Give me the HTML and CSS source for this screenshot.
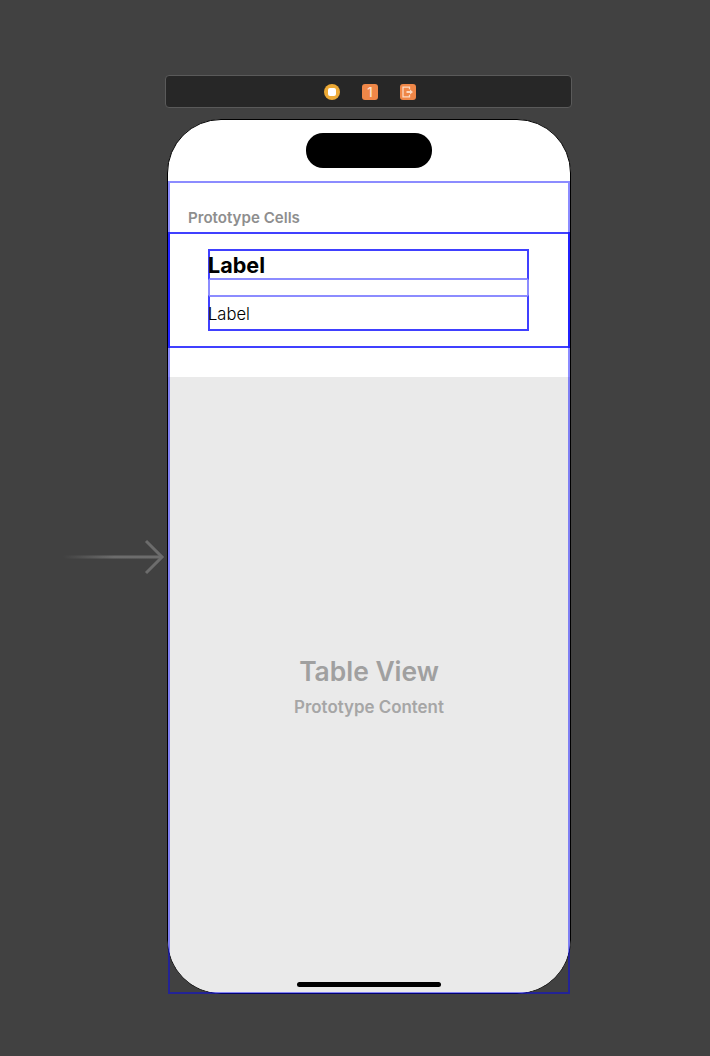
FILE: index.html
```html
<!DOCTYPE html>
<html lang="en">
<head>
    <meta charset="UTF-8">
    <title>Storyboard Scene</title>
    <link rel="stylesheet" href="styles.css">
</head>
<body>

<svg class="entry-arrow" width="102" height="36" viewBox="0 0 102 36">
    <defs>
        <linearGradient id="arrow-fade" x1="0" y1="0" x2="102" y2="0" gradientUnits="userSpaceOnUse">
            <stop offset="0" stop-color="#6c6c6c" stop-opacity="0"/>
            <stop offset="0.5" stop-color="#6c6c6c"/>
            <stop offset="1" stop-color="#6c6c6c"/>
        </linearGradient>
    </defs>
    <rect x="0" y="16.5" width="99" height="3" fill="url(#arrow-fade)"/>
    <path d="M83 2 L99 18 L83 34" fill="none" stroke="#6c6c6c" stroke-width="3"/>
</svg>

<div class="scene">
    <div class="scene-bar">
        <span class="bar-icon bar-icon-round"><span class="stop-square"></span></span>
        <span class="bar-icon">1</span>
        <span class="bar-icon">
            <svg width="12" height="12" viewBox="0 0 12 12">
                <path d="M7.5 3.2 V1.2 H1 V10.8 H7.5 V8.8" fill="none" stroke="#fbd9c2" stroke-width="1.3"/>
                <path d="M4.5 5 H8 V3.4 L11 6 L8 8.6 V7 H4.5 Z" fill="#fbd9c2"/>
            </svg>
        </span>
    </div>

    <div class="device-wrap">
        <div class="device">
            <div class="island"></div>
            <div class="table-header">Prototype Cells</div>
            <div class="cell">
                <div class="stack">
                    <div class="stack-title">Label</div>
                    <div class="stack-gap"></div>
                    <div class="stack-detail">Label</div>
                </div>
            </div>
            <div class="cell-space"></div>
            <div class="table-body">
                <div class="table-name">Table View</div>
                <div class="table-note">Prototype Content</div>
            </div>
            <div class="home-bar"></div>
        </div>
        <div class="table-outline"></div>
    </div>
</div>

</body>
</html>
```

FILE: styles.css
```css
body {
    font-family: 'Inter', 'Liberation Sans', sans-serif;
    background: #414141;
    margin: 0;
    height: 1056px;
    overflow: hidden;
    position: relative;
}

.entry-arrow {
    position: absolute;
    left: 63px;
    top: 539px;
}

.scene {
    width: 407px;
    margin-left: 165px;
    padding-top: 75px;
}

.scene-bar {
    height: 31px;
    background: #272727;
    border: 1px solid #5a5a5a;
    border-radius: 4px;
    display: flex;
    justify-content: center;
    align-items: center;
    gap: 22px;
    padding-left: 3px;
}

.bar-icon {
    width: 16px;
    height: 16px;
    border-radius: 3px;
    background: #ef8748;
    color: #fbe3d3;
    font-size: 13px;
    font-weight: 500;
    display: flex;
    justify-content: center;
    align-items: center;
}

.bar-icon-round {
    border-radius: 50%;
    background: #eca935;
}

.stop-square {
    width: 8px;
    height: 8px;
    background: #fff;
    border-radius: 2px;
}

.device-wrap {
    position: relative;
    margin-top: 11px;
    margin-left: 2px;
    width: 404px;
}

.device {
    height: 873px;
    background: #fff;
    border: 1px solid #000;
    border-radius: 54px;
    overflow: hidden;
    display: flex;
    flex-direction: column;
    position: relative;
}

.island {
    width: 126px;
    height: 35px;
    background: #000;
    border-radius: 17px;
    margin: 13px 0 0 138px;
    flex-shrink: 0;
}

.table-header {
    height: 64px;
    box-sizing: border-box;
    padding: 41px 0 0 20px;
    font-size: 15.1px;
    font-weight: 600;
    line-height: 18px;
    color: #8e8e8e;
}

.cell {
    height: 116px;
    box-sizing: border-box;
    border: 2px solid #4040ff;
    padding: 15px 38px;
}

.stack {
    width: 321px;
    display: flex;
    flex-direction: column;
}

.stack-title {
    height: 31px;
    box-sizing: border-box;
    border: 2px solid #4040ff;
    border-bottom-color: #8c8cff;
    font-size: 21.6px;
    font-weight: 700;
    line-height: 29px;
    text-indent: -2px;
    color: #000;
}

.stack-gap {
    height: 15px;
    box-sizing: border-box;
    border-left: 2px solid #8c8cff;
    border-right: 2px solid #8c8cff;
}

.stack-detail {
    height: 36px;
    box-sizing: border-box;
    border: 2px solid #4040ff;
    border-top-color: #8c8cff;
    font-size: 16.6px;
    font-weight: 300;
    line-height: 34px;
    text-indent: -2px;
    color: #000;
}

.cell-space {
    height: 29px;
}

.table-body {
    flex: 1;
    background: #eaeaea;
    text-align: center;
    padding-top: 275px;
}

.table-name {
    font-size: 26.4px;
    font-weight: 600;
    line-height: 38px;
    color: #a0a0a0;
}

.table-note {
    font-size: 16.9px;
    font-weight: 600;
    line-height: 24px;
    margin-top: 5px;
    color: #a6a6a6;
}

.home-bar {
    position: absolute;
    left: 129px;
    bottom: 6px;
    width: 144px;
    height: 5px;
    border-radius: 3px;
    background: #000;
}

.table-outline {
    position: absolute;
    left: 1px;
    top: 62px;
    width: 402px;
    height: 813px;
    box-sizing: border-box;
    border: 2px solid rgba(0, 0, 255, 0.45);
    pointer-events: none;
}
```
